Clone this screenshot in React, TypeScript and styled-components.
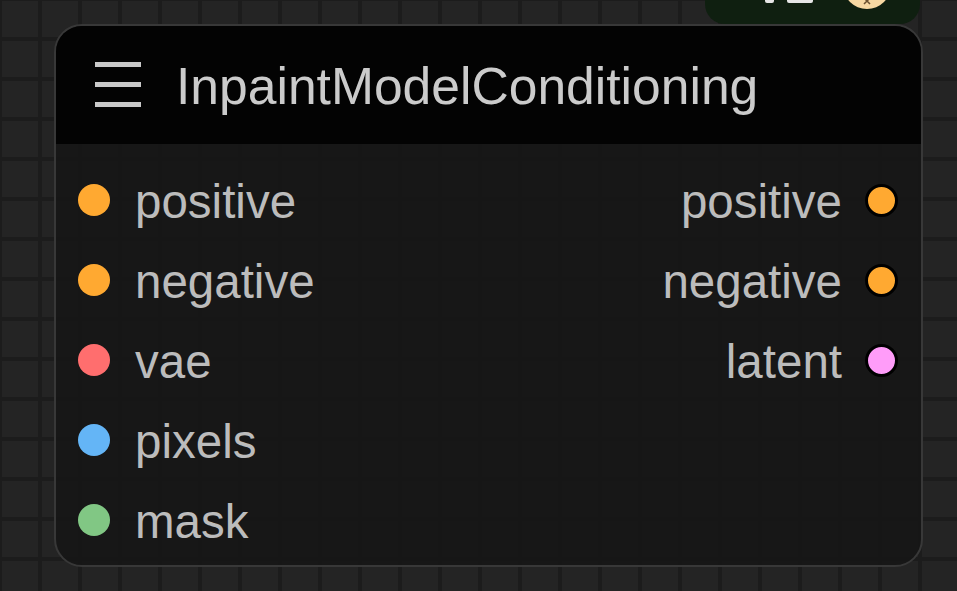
import React from "react";
import styled, { createGlobalStyle } from "styled-components";

interface Slot {
  name: string;
  color: string;
}

const inputs: Slot[] = [
  { name: "positive", color: "#ffa931" },
  { name: "negative", color: "#ffa931" },
  { name: "vae", color: "#ff6e6e" },
  { name: "pixels", color: "#64b5f6" },
  { name: "mask", color: "#81c784" },
];

const outputs: Slot[] = [
  { name: "positive", color: "#ffa931" },
  { name: "negative", color: "#ffa931" },
  { name: "latent", color: "#ff9cf9" },
];

const GlobalStyle = createGlobalStyle`
  html, body {
    margin: 0;
    padding: 0;
    background: #232323;
    overflow: hidden;
  }
  * {
    box-sizing: border-box;
  }
`;

const Canvas = styled.div`
  position: relative;
  width: 957px;
  height: 591px;
  overflow: hidden;
  padding: 24px 0 0 54px;
  background-color: #242424;
  background-image: linear-gradient(to right, #1c1c1c 4px, transparent 4px),
    linear-gradient(to bottom, #1c1c1c 4px, transparent 4px);
  background-size: 40px 40px;
  background-position: 38px 37px;
  font-family: "Liberation Sans", Arial, sans-serif;
`;

const Toolbar = styled.div`
  position: absolute;
  top: -30px;
  left: 705px;
  width: 215px;
  height: 54px;
  border-radius: 20px;
  background: #0f1f10;
  overflow: hidden;
`;

const ToolbarMark = styled.div<{ $left: number; $width: number }>`
  position: absolute;
  top: 27px;
  left: ${(p) => p.$left}px;
  width: ${(p) => p.$width}px;
  height: 6px;
  border-radius: 2px;
  background: #e6e6e6;
`;

const Avatar = styled.div`
  position: absolute;
  left: 138px;
  top: -9px;
  width: 48px;
  height: 48px;
  border-radius: 50%;
  background: #f7d8a3;
  display: flex;
  align-items: flex-end;
  justify-content: center;
  padding-bottom: 4px;
`;

const Node = styled.div`
  width: 869px;
  height: 543px;
  border: 2px solid #383838;
  border-radius: 28px;
  overflow: hidden;
  display: flex;
  flex-direction: column;
  background: rgba(22, 22, 22, 0.94);
`;

const Header = styled.div`
  height: 118px;
  flex: none;
  display: flex;
  align-items: center;
  gap: 35px;
  padding-left: 39px;
  background: #030303;
`;

const Title = styled.div`
  font-size: 51.6px;
  color: #cbcbcb;
  margin-top: 2px;
`;

const Body = styled.div`
  flex: 1;
  display: flex;
  justify-content: space-between;
  padding: 16px 0 0;
`;

const Column = styled.div<{ $side: "left" | "right" }>`
  display: flex;
  flex-direction: column;
  align-items: ${(p) => (p.$side === "left" ? "flex-start" : "flex-end")};
  padding: ${(p) => (p.$side === "left" ? "0 0 0 22px" : "0 23px 0 0")};
`;

const Row = styled.div<{ $gap: number }>`
  height: 80px;
  display: flex;
  align-items: center;
  gap: ${(p) => p.$gap}px;
`;

const Dot = styled.span<{ $color: string; $outlined?: boolean }>`
  flex: none;
  width: ${(p) => (p.$outlined ? 33 : 32)}px;
  height: ${(p) => (p.$outlined ? 33 : 32)}px;
  border-radius: 50%;
  background: ${(p) => p.$color};
  border: ${(p) => (p.$outlined ? "3px solid #000" : "none")};
`;

const Label = styled.span`
  font-size: 47.5px;
  color: #bcbcbc;
  line-height: 1;
  margin-top: 4px;
`;

function MenuIcon() {
  return (
    <svg width="46" height="46" viewBox="0 0 46 46" fill="#c9c9c9">
      <rect x="0" y="0" width="46" height="5" />
      <rect x="0" y="20" width="46" height="5" />
      <rect x="0" y="40" width="46" height="5" />
    </svg>
  );
}

function CloseMark() {
  return (
    <svg width="8" height="8" viewBox="0 0 8 8" stroke="#6b5030" strokeWidth="1.5">
      <path d="M1 1 L7 7 M7 1 L1 7" />
    </svg>
  );
}

export default function App() {
  return (
    <>
      <GlobalStyle />
      <Canvas>
        <Toolbar>
          <ToolbarMark $left={60} $width={9} />
          <ToolbarMark $left={82} $width={26} />
          <Avatar>
            <CloseMark />
          </Avatar>
        </Toolbar>
        <Node>
          <Header>
            <MenuIcon />
            <Title>InpaintModelConditioning</Title>
          </Header>
          <Body>
            <Column $side="left">
              {inputs.map((s) => (
                <Row key={s.name} $gap={25}>
                  <Dot $color={s.color} />
                  <Label>{s.name}</Label>
                </Row>
              ))}
            </Column>
            <Column $side="right">
              {outputs.map((s) => (
                <Row key={s.name} $gap={23}>
                  <Label>{s.name}</Label>
                  <Dot $color={s.color} $outlined />
                </Row>
              ))}
            </Column>
          </Body>
        </Node>
      </Canvas>
    </>
  );
}
